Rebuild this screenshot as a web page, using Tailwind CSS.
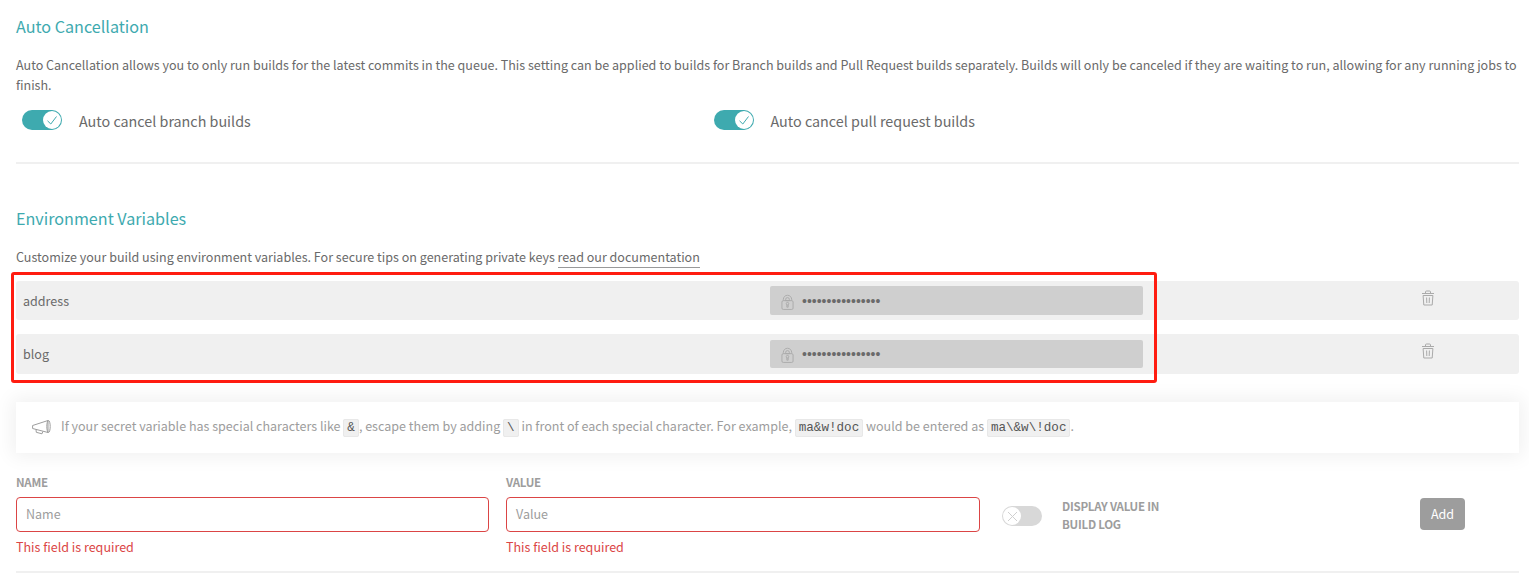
<!DOCTYPE html>
<html lang="en">
<head>
<meta charset="utf-8">
<title>Settings</title>
<script src="https://cdn.jsdelivr.net/npm/@tailwindcss/browser@4"></script>
</head>
<body class="bg-white font-['Noto_Sans_CJK_SC',sans-serif] text-[12.545px] text-[#6a6a6a]">
<svg class="hidden">
  <symbol id="lock" viewBox="0 0 14 17"><g fill="none" stroke="currentColor"><rect x="1" y="6.5" width="12" height="9.5" rx="1.5"/><path d="M2.500 6.500V5.200a4.500 4.500 0 0 1 9 0v1.300M5 6.500V5.200a2 2 0 0 1 4 0v1.300z"/><circle cx="7" cy="9.800" r="1.400"/><path d="M6.300 11v2.500h1.400V11"/></g></symbol>
  <symbol id="trash" viewBox="0 0 12 16"><g fill="none" stroke="currentColor"><path d="M0 3.500h12M3.500 3V2q0-1 1-1h3q1 0 1 1v1M1.100 5.500h9.800l-.7 9.500H1.800zM4.600 7.500l.2 5.500M7.400 7.500l-.2 5.500"/></g></symbol>
</svg>
<main class="flex h-[573px] flex-col overflow-hidden pr-2.5 pl-4">
  <section class="flex h-[164px] shrink-0 flex-col border-b-2 border-[#f0f0f0]">
    <h2 class="mt-3.5 text-[16.15px] leading-6 text-[#3eaaaf]">Auto Cancellation</h2>
    <p class="mt-[17px] leading-5">Auto Cancellation allows you to only run builds for the latest commits in the queue. This setting can be applied to builds for Branch builds and Pull Request builds separately. Builds will only be canceled if they are waiting to run, allowing for any running jobs to finish.</p>
    <div class="mt-[15px] grid grid-cols-[692px_1fr] pl-1.5 text-[14.34px]">
      <div class="flex">
        <span class="flex h-5 w-10 justify-end rounded-full bg-[#3eaaaf] p-px"><span class="size-[18px] rounded-full bg-white"><svg class="size-[18px]" viewBox="0 0 18 18" fill="none" stroke="#3eaaaf"><path d="M4.500 9.800l3.300 3.200 5.700-7.500"/></svg></span></span>
        <span class="mt-px ml-[17px] leading-5">Auto cancel branch builds</span>
      </div>
      <div class="flex">
        <span class="flex h-5 w-10 justify-end rounded-full bg-[#3eaaaf] p-px"><span class="size-[18px] rounded-full bg-white"><svg class="size-[18px]" viewBox="0 0 18 18" fill="none" stroke="#3eaaaf"><path d="M4.500 9.800l3.300 3.200 5.700-7.500"/></svg></span></span>
        <span class="mt-px ml-[16.5px] leading-5">Auto cancel pull request builds</span>
      </div>
    </div>
  </section>
  <section class="flex h-[409px] shrink-0 flex-col border-b-2 border-[#f0f0f0]">
    <h2 class="mt-[42px] text-[16.15px] leading-6 text-[#3eaaaf]">Environment Variables</h2>
    <p class="mt-[17px] h-[34px] leading-[19px]">Customize your build using environment variables. For secure tips on generating private keys <a class="inline-block border-b border-[#999] pb-px">read our documentation</a></p>
    <div class="relative flex shrink-0 flex-col gap-3.5">
      <div class="flex h-[39px] items-center rounded-[3px] bg-[#f0f0f0] pl-[7px]">
        <span class="w-[747px] pt-px">address</span>
        <span class="flex h-[29px] w-[373px] items-center rounded-[2px] bg-[#cfcfcf] pl-[11px]"><svg class="mt-[3px] h-[17px] w-[13px] text-[#aaa]"><use href="#lock"/></svg><span class="ml-2 font-['Liberation_Sans',sans-serif] text-sm">••••••••••••••••</span></span>
        <svg class="mb-1.5 ml-[279px] h-4 w-3 text-[#aaa]"><use href="#trash"/></svg>
      </div>
      <div class="flex h-10 items-center rounded-[3px] bg-[#f0f0f0] pl-[7px]">
        <span class="w-[747px]">blog</span>
        <span class="flex h-7 w-[373px] items-center rounded-[2px] bg-[#cfcfcf] pl-[11px]"><svg class="mt-[3px] h-[17px] w-[13px] text-[#aaa]"><use href="#lock"/></svg><span class="ml-2 font-['Liberation_Sans',sans-serif] text-sm">••••••••••••••••</span></span>
        <svg class="mb-1.5 ml-[279px] h-4 w-3 text-[#aaa]"><use href="#trash"/></svg>
      </div>
      <div class="absolute -top-[9px] -left-[5px] h-[111px] w-[1146px] rounded-[3px] border-3 border-[#ff1c10]"></div>
    </div>
    <div class="mt-7 flex h-[51px] shrink-0 items-center bg-white pl-4 text-[#9d9d9d] shadow-[0_0_18px_4px_rgba(0,0,0,0.06)]">
      <svg class="-mt-px h-4 w-5" viewBox="0 0 20 16" fill="none" stroke="currentColor"><path d="M.6 6.500L16 1.500v12L.6 9.500zM4 10.500l.3 2.800 5.700 1.500.8-2.300"/><ellipse cx="16.500" cy="7.500" rx="1.700" ry="6"/></svg>
      <p class="ml-[9px] whitespace-nowrap">If your secret variable has special characters like <code class="rounded-[2px] border border-[#e8e8e8] bg-[#f0f0f0] px-[3px] py-px font-['Liberation_Mono',monospace] text-[12.6px] text-[#555]">&amp;</code>, escape them by adding <code class="rounded-[2px] border border-[#e8e8e8] bg-[#f0f0f0] px-[3px] py-px font-['Liberation_Mono',monospace] text-[12.6px] text-[#555]">\</code> in front of each special character. For example, <code class="rounded-[2px] border border-[#e8e8e8] bg-[#f0f0f0] px-[3px] py-px font-['Liberation_Mono',monospace] text-[12.6px] text-[#555]">ma&amp;w!doc</code> would be entered as <code class="rounded-[2px] border border-[#e8e8e8] bg-[#f0f0f0] px-[3px] py-px font-['Liberation_Mono',monospace] text-[12.6px] text-[#555]">ma\&amp;w\!doc</code>.</p>
    </div>
    <form class="mt-5 flex">
      <label class="flex w-[473px] flex-col"><span class="text-[11.5px] leading-[18px] font-bold tracking-[-0.25px] text-[#9d9d9d]">NAME</span><span class="mt-1.5 flex h-[35px] items-center rounded-[4px] border border-[#db4545] pl-[9px] text-[#9d9d9d]">Name</span><span class="mt-[5px] leading-5 text-[#db4545]">This field is required</span></label>
      <label class="ml-[17px] flex w-[474px] flex-col"><span class="text-[11.5px] leading-[18px] font-bold tracking-[-0.25px] text-[#9d9d9d]">VALUE</span><span class="mt-1.5 flex h-[35px] items-center rounded-[4px] border border-[#db4545] pl-[9px] text-[#9d9d9d]">Value</span><span class="mt-[5px] leading-5 text-[#db4545]">This field is required</span></label>
      <span class="mt-[33px] ml-[22px] flex h-5 w-10 rounded-full bg-[#d8d8d8] p-px"><span class="size-[18px] rounded-full bg-white"><svg class="size-[18px]" viewBox="0 0 18 18" fill="none" stroke="#d0d0d0"><path d="M5 5l9 9M14 5l-9 9"/></svg></span></span>
      <span class="mt-6 ml-5 w-[120px] text-[11.5px] leading-[18px] font-bold tracking-[-0.25px] text-[#9d9d9d]">DISPLAY VALUE IN<br>BUILD LOG</span>
      <span class="mt-[25px] ml-[238px] flex h-8 w-[45px] items-center justify-center rounded-[4px] bg-[#9d9d9d] text-white">Add</span>
    </form>
  </section>
</main>
</body>
</html>
